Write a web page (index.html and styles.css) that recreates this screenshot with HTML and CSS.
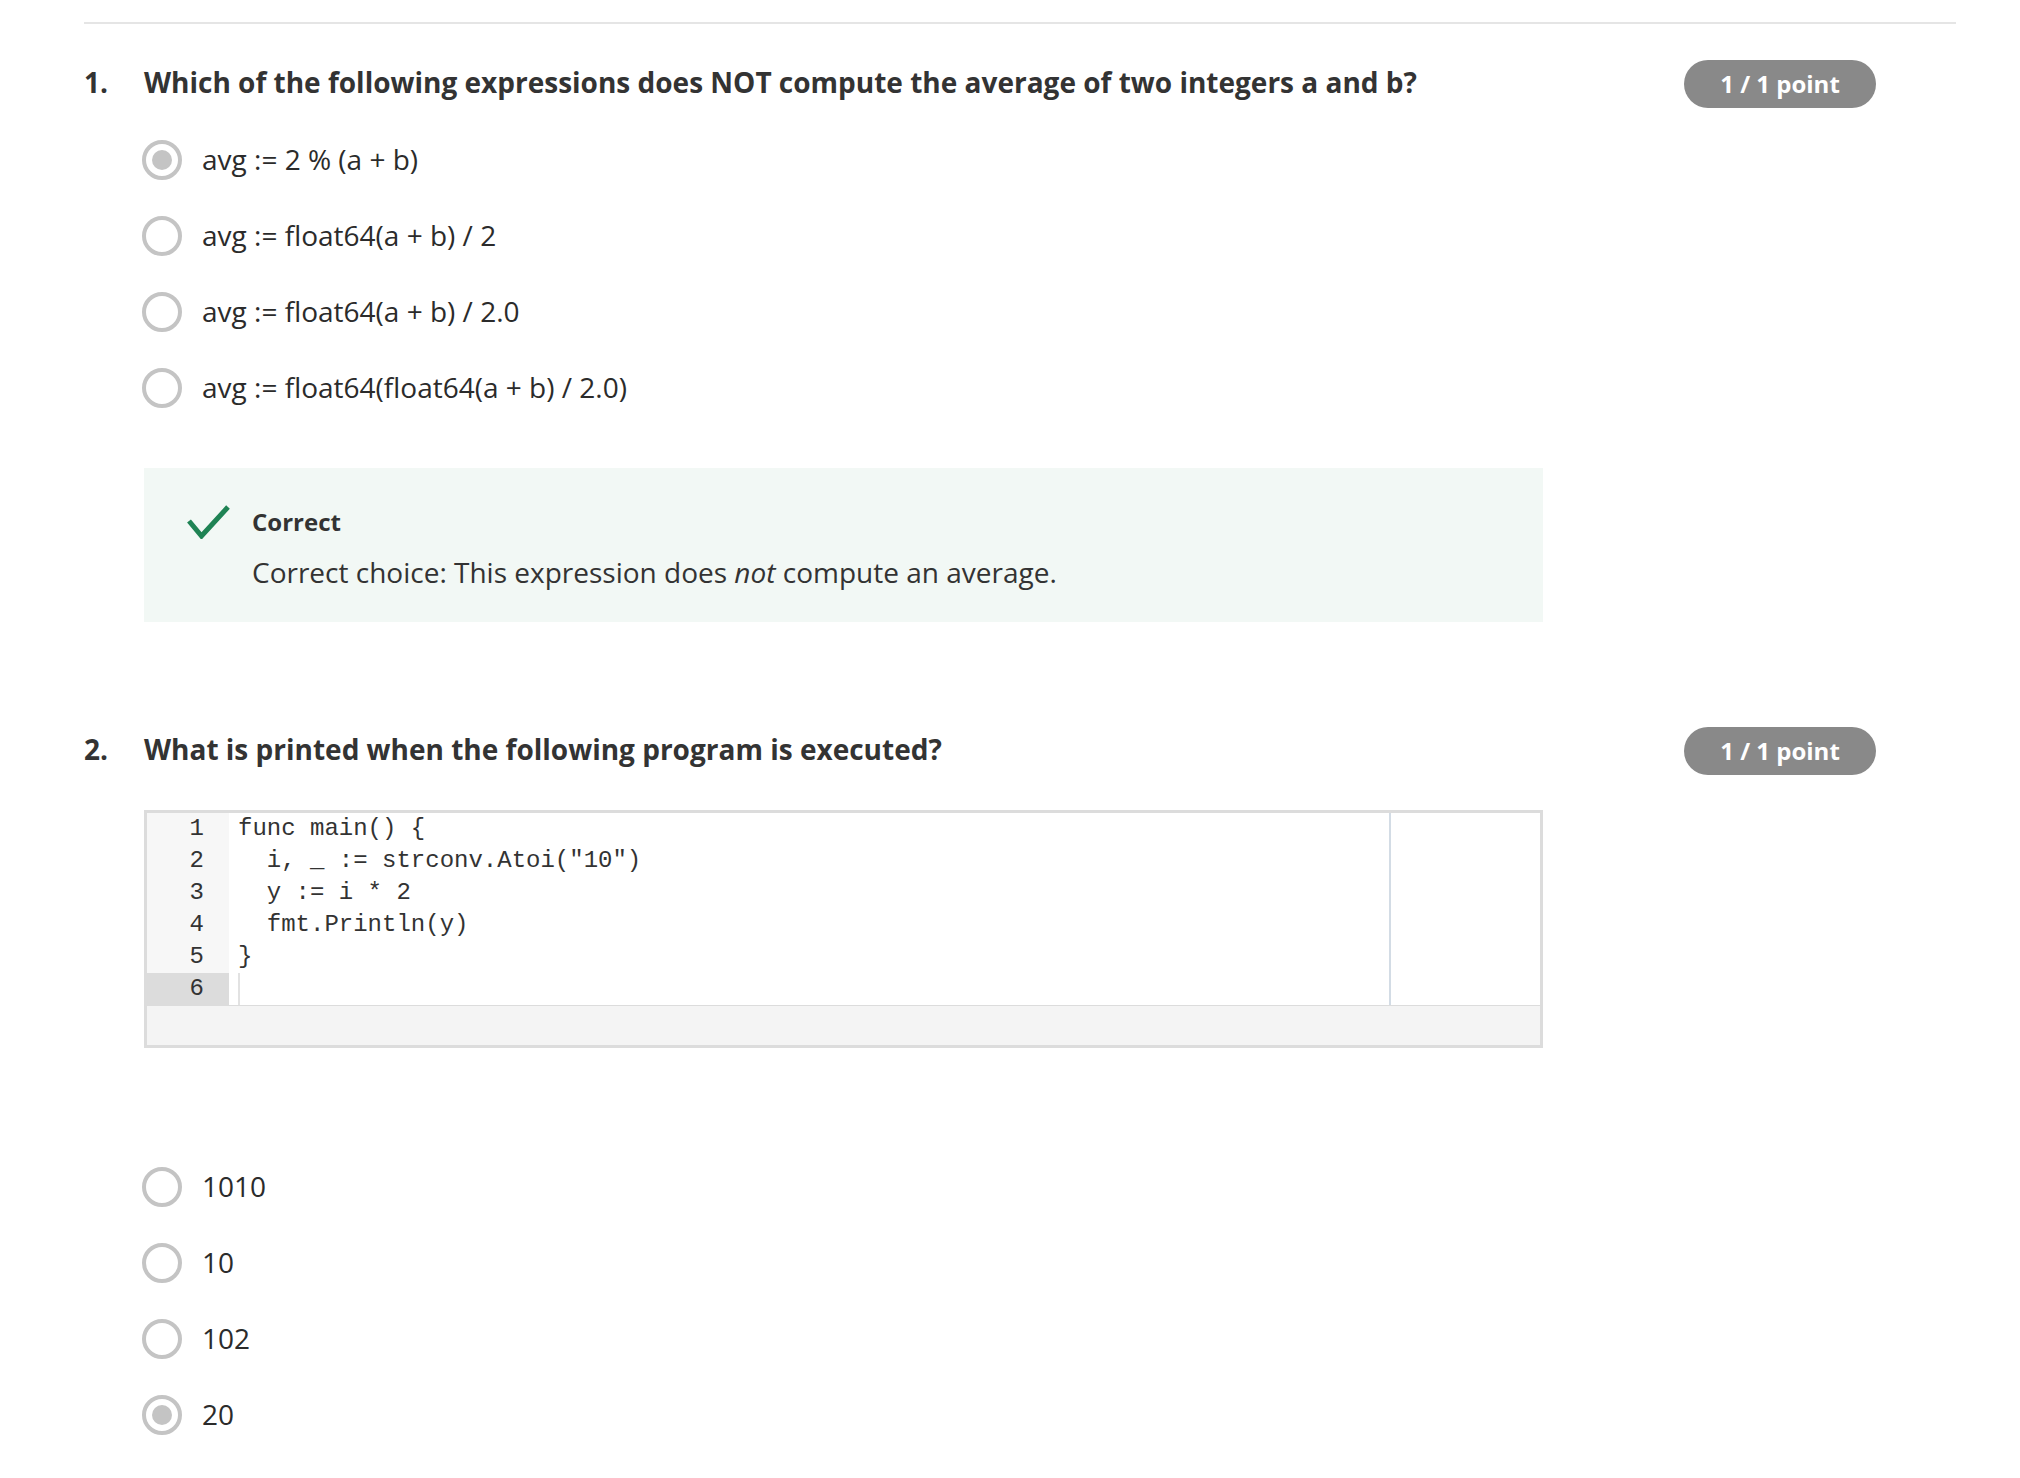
FILE: index.html
```html
<!DOCTYPE html>
<html lang="en">
<head>
<meta charset="utf-8">
<title>Quiz</title>
<link rel="stylesheet" href="styles.css">
</head>
<body>
<div class="page">
  <hr class="rule">

  <section class="question q-first">
    <div class="q-head">
      <span class="q-num">1.</span>
      <h2 class="q-text">Which of the following expressions does NOT compute the average of two integers a and b?</h2>
      <span class="badge">1 / 1 point</span>
    </div>
    <div class="q-body">
      <ul class="options">
        <li class="option"><span class="radio checked"></span><span class="opt-text">avg := 2 % (a + b)</span></li>
        <li class="option"><span class="radio"></span><span class="opt-text">avg := float64(a + b) / 2</span></li>
        <li class="option"><span class="radio"></span><span class="opt-text">avg := float64(a + b) / 2.0</span></li>
        <li class="option"><span class="radio"></span><span class="opt-text">avg := float64(float64(a + b) / 2.0)</span></li>
      </ul>
      <div class="feedback">
        <svg class="check" width="43" height="34" viewBox="0 0 43 34" aria-hidden="true">
          <polyline points="2,16 14.5,31 41,2" fill="none" stroke="#1f8354" stroke-width="5"/>
        </svg>
        <div class="fb-text">
          <div class="fb-title">Correct</div>
          <div class="fb-body">Correct choice: This expression does <em>not</em> compute an average.</div>
        </div>
      </div>
    </div>
  </section>

  <section class="question q-second">
    <div class="q-head">
      <span class="q-num">2.</span>
      <h2 class="q-text">What is printed when the following program is executed?</h2>
      <span class="badge">1 / 1 point</span>
    </div>
    <div class="q-body">
      <div class="editor">
        <div class="editor-main">
          <div class="gutter">
            <div class="ln">1</div>
            <div class="ln">2</div>
            <div class="ln">3</div>
            <div class="ln">4</div>
            <div class="ln">5</div>
            <div class="ln active">6</div>
          </div>
          <div class="code-area">
<pre class="code"><span class="cl">func main() {</span>
<span class="cl">  i, _ := strconv.Atoi("10")</span>
<span class="cl">  y := i * 2</span>
<span class="cl">  fmt.Println(y)</span>
<span class="cl">}</span>
<span class="cl"><span class="cursor"></span></span></pre>
          </div>
          <div class="code-right"></div>
        </div>
        <div class="editor-bar"></div>
      </div>
      <ul class="options options-second">
        <li class="option"><span class="radio"></span><span class="opt-text">1010</span></li>
        <li class="option"><span class="radio"></span><span class="opt-text">10</span></li>
        <li class="option"><span class="radio"></span><span class="opt-text">102</span></li>
        <li class="option"><span class="radio checked"></span><span class="opt-text">20</span></li>
      </ul>
    </div>
  </section>
</div>
</body>
</html>
```

FILE: styles.css
```css
* { box-sizing: border-box; }

html, body {
  margin: 0;
  padding: 0;
  background: #fff;
}

body {
  font-family: "Open Sans", "Noto Sans", "Liberation Sans", sans-serif;
  color: #333;
}

.page {
  padding: 22px 64px 0 84px;
}

.rule {
  margin: 0;
  border: 0;
  border-top: 2px solid #e5e5e5;
  height: 0;
}

.question.q-first { margin-top: 36px; }
.question.q-second { margin-top: 105px; }

.q-head {
  display: grid;
  grid-template-columns: 60px 1399px 1fr;
  align-items: center;
  height: 48px;
  padding-right: 80px;
}

.q-num {
  font-weight: 700;
  font-size: 28px;
  line-height: 42px;
  padding-bottom: 4px;
}

.q-text {
  margin: 0;
  font-size: 28px;
  font-weight: 700;
  line-height: 42px;
  padding-bottom: 4px;
  color: #333;
}

.badge {
  justify-self: end;
  width: 192px;
  height: 48px;
  border-radius: 24px;
  background: #898989;
  color: #fff;
  font-weight: 700;
  font-size: 24px;
  line-height: 47px;
  text-align: center;
}

.q-body {
  margin-left: 60px;
  width: 1399px;
}

.options {
  list-style: none;
  margin: 14px 0 0 0;
  padding: 0;
}

.options-second { margin-top: 101px; }

.option {
  display: flex;
  align-items: center;
  height: 76px;
}

.radio {
  width: 40px;
  height: 40px;
  margin-left: -2px;
  border: 4px solid #c4c4c4;
  border-radius: 50%;
  background: #fff;
  display: flex;
  align-items: center;
  justify-content: center;
  flex: none;
}

.radio.checked::after {
  content: "";
  width: 20px;
  height: 20px;
  border-radius: 50%;
  background: #c4c4c4;
}

.opt-text {
  margin-left: 20px;
  font-size: 28px;
  line-height: 38px;
  padding-bottom: 2px;
  color: #2b2b2b;
}

.feedback {
  margin-top: 42px;
  height: 154px;
  background: #f2f8f5;
  display: flex;
  align-items: flex-start;
  padding: 37px 40px 0 43px;
}

.check {
  flex: none;
  margin-right: 22px;
}

.fb-title {
  font-size: 24px;
  font-weight: 700;
  line-height: 30px;
  margin-top: 2px;
}

.fb-body {
  margin-top: 16px;
  font-size: 28px;
  line-height: 38px;
}

.fb-body em { font-style: italic; }

.editor {
  margin-top: 35px;
  border: 3px solid #dcdcdc;
  background: #fff;
}

.editor-main {
  display: flex;
  height: 192px;
}

.gutter {
  width: 82px;
  background: #f7f7f7;
  flex: none;
}

.ln {
  height: 32px;
  line-height: 32px;
  text-align: right;
  padding-right: 25px;
  font-family: "Liberation Mono", "DejaVu Sans Mono", monospace;
  font-size: 24px;
  color: #333;
}

.ln.active { background: #dcdcdc; }

.code-area {
  width: 1162px;
  border-right: 2px solid #d3dce5;
  flex: none;
}

.code {
  margin: 0;
  padding-left: 9px;
  font-family: "Liberation Mono", "DejaVu Sans Mono", monospace;
  font-size: 24px;
  line-height: 32px;
  color: #333;
}

.cl {
  display: inline-block;
  height: 32px;
  vertical-align: top;
}

.cursor {
  display: inline-block;
  width: 2px;
  height: 32px;
  background: #e2e2e2;
  vertical-align: top;
}

.code-right { flex: 1; }

.editor-bar {
  height: 40px;
  border-top: 1px solid #dcdcdc;
  background: #f4f4f4;
}
```
